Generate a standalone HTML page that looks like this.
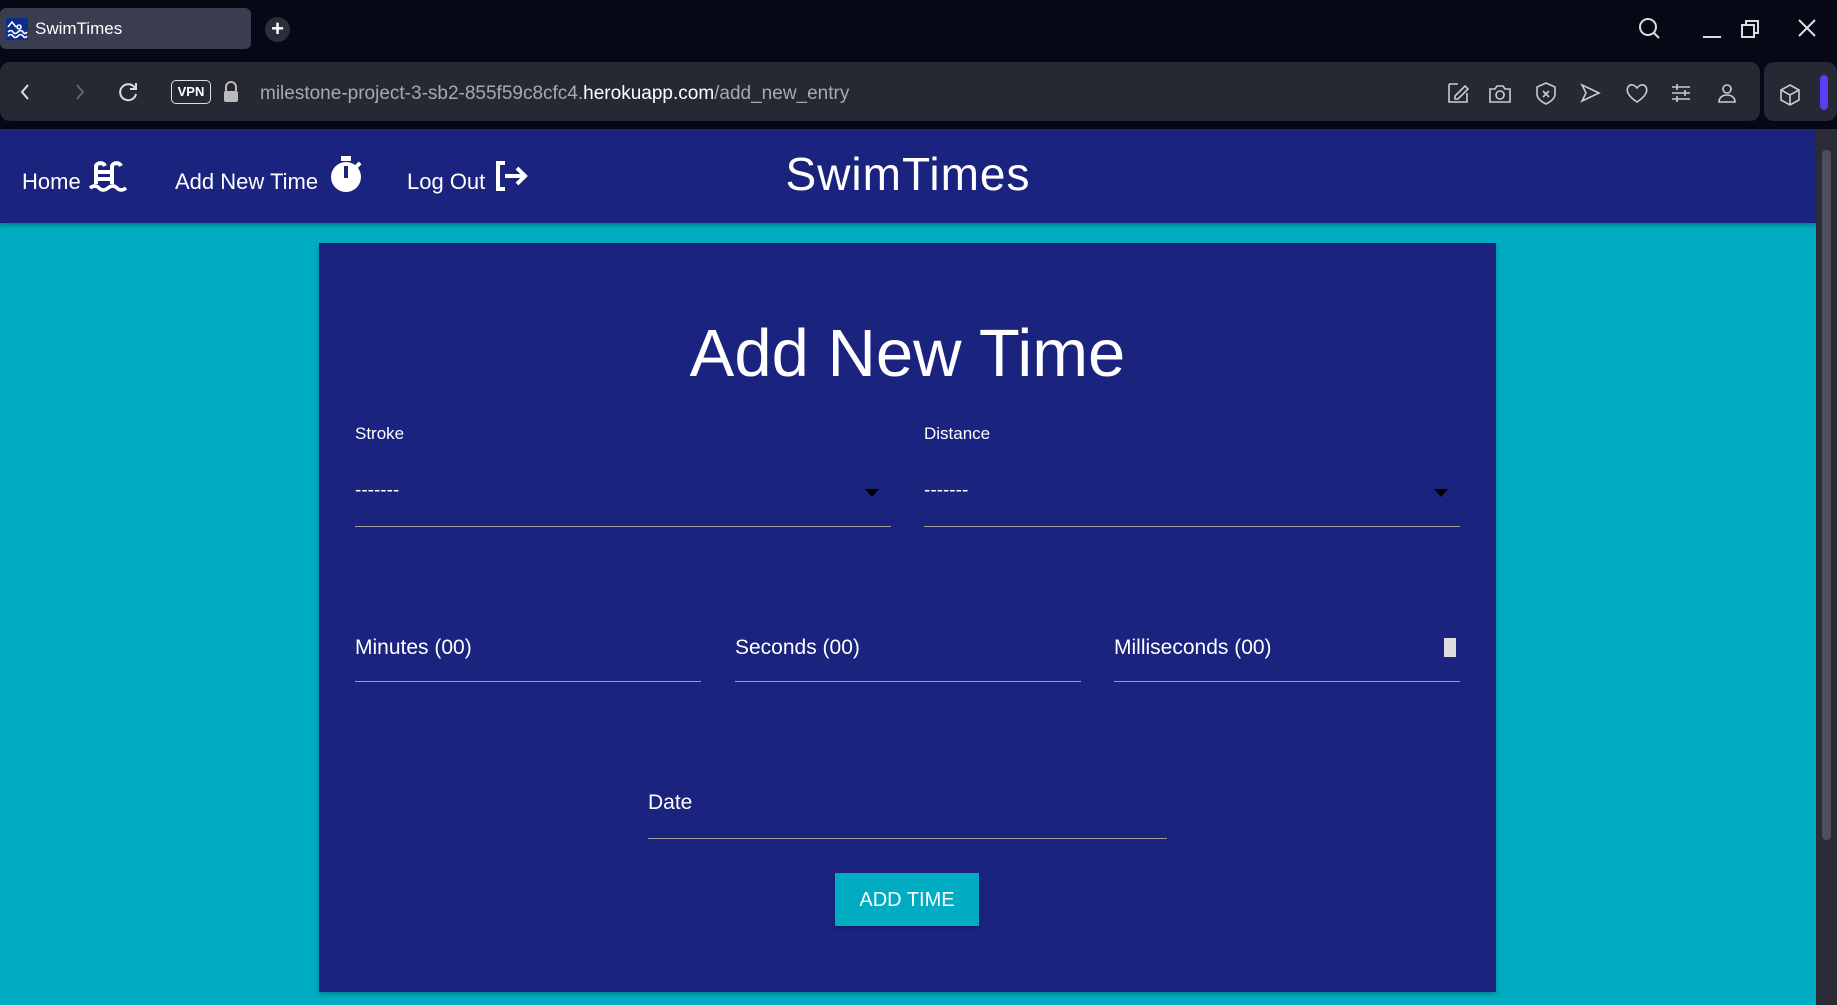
<!DOCTYPE html>
<html><head><meta charset="utf-8"><style>
*{margin:0;padding:0;box-sizing:border-box}
body{width:1837px;height:1005px;overflow:hidden;background:#00acc1;font-family:"Liberation Sans",sans-serif;position:relative}
.abs{position:absolute}
.top{left:0;top:0;width:1837px;height:129px;background:#050815}
.tab{left:0;top:8px;width:251px;height:41px;background:#3a3d50;border-radius:6px;color:#fff;font-size:17px;line-height:41px;padding-left:35px}
.addr{left:0;top:62px;width:1760px;height:59px;background:#262833;border-radius:10px}
.ext{left:1764px;top:62px;width:73px;height:59px;background:#262833;border-radius:10px}
.url{left:260px;top:83px;font-size:19px;color:#a8a9b0}
.url b{color:#fff;font-weight:normal}
.nav{left:0;top:129px;width:1816px;height:94px;background:#1a237e;box-shadow:0 2px 4px rgba(0,0,0,.3)}
.nl{color:#fff;font-size:22px;top:169px}
.card{left:319px;top:243px;width:1177px;height:749px;background:#1a237e;box-shadow:0 2px 4px rgba(0,0,0,.25)}
.line{height:1px;background:#9e9e9e}
.lbl{color:#fff;font-size:17px}
.in{color:#fff;font-size:21px}
.tri{width:0;height:0;border-left:7px solid transparent;border-right:7px solid transparent;border-top:8px solid #000}
svg{position:absolute}
</style></head><body>
<div class="abs top"></div>
<div class="abs tab">SwimTimes</div>
<svg style="left:6px;top:18px" width="22" height="22"><rect width="22" height="22" fill="#0d2d8f"/><path d="M2 9l4-5 4 5M13 7a2 2 0 1 0 .1 0M2 14q3-3 5 0t5 0 5 0 4 0M2 18q3-3 5 0t5 0 5 0 4 0" stroke="#fff" fill="none" stroke-width="1.6"/></svg>
<div class="abs" style="left:265px;top:17px;width:25px;height:25px;border-radius:50%;background:#2a2d3a;color:#fff;font-size:22px;line-height:24px;text-align:center;font-weight:bold">+</div>
<svg style="left:1635px;top:17px" width="200" height="26" stroke="#ddd" fill="none" stroke-width="2"><circle cx="13" cy="10" r="8"/><path d="M19 16l5 5"/><path d="M68 20h18"/><rect x="107" y="8" width="12" height="12"/><path d="M111 8V4h12v12h-4"/><path d="M164 3l16 16M180 3l-16 16"/></svg>
<div class="abs addr"></div>
<div class="abs ext"></div>
<svg style="left:15px;top:80px" width="140" height="24" stroke-width="2" fill="none"><path d="M13 5l-6 7 6 7" stroke="#ddd"/><path d="M62 5l6 7-6 7" stroke="#666"/><path d="M120 8a8 8 0 1 0 1 6M121 3v6h-6" stroke="#ddd"/></svg>
<div class="abs" style="left:171px;top:80px;width:40px;height:24px;border:1.5px solid #ddd;border-radius:5px;color:#fff;font-size:13px;font-weight:bold;text-align:center;line-height:21px">VPN</div>
<svg style="left:222px;top:80px" width="18" height="24"><path d="M4 11V7a5 5 0 0 1 10 0v4" stroke="#bbb" stroke-width="2" fill="none"/><rect x="2" y="11" width="14" height="11" rx="2" fill="#bbb"/></svg>
<div class="abs url">milestone-project-3-sb2-855f59c8cfc4.<b>herokuapp.com</b>/add_new_entry</div>
<svg style="left:1445px;top:80px" width="390" height="26" stroke="#ccc" fill="none" stroke-width="1.6"><path d="M4 4h9M4 4v18h18v-9M10 16l10-10 3 3-10 10h-3z"/><path d="M45 9h5l2-3h6l2 3h5v13h-20zM55 11a4 4 0 1 0 .1 0"/><path d="M101 3l9 4v7c0 5-5 8-9 10-4-2-9-5-9-10v-7zM98 11l6 6M104 11l-6 6"/><path d="M137 5l17 8-17 8 4-8z"/><path d="M192 22c-9-6-11-11-9-15 2-3 6-3 9 1 3-4 7-4 9-1 2 4 0 9-9 15z"/><path d="M227 7h18M227 13h18M227 19h18M232 4v6M240 10v6M232 16v6"/><path d="M282 5a4 4 0 1 0 .1 0M274 22c0-4 3-7 8-7s8 3 8 7z"/><path d="M345 5l9 5v10l-9 5-9-5v-10zM336 10l9 5 9-5M345 15v10"/></svg>
<div class="abs" style="left:1820px;top:75px;width:8px;height:35px;background:#5b3cf5;border-radius:4px"></div>
<div class="abs nav"></div>
<div class="abs" style="left:1816px;top:129px;width:21px;height:876px;background:#2b2c36"></div>
<div class="abs" style="left:1822px;top:150px;width:9px;height:690px;background:#4d4e5c;border-radius:4px"></div>
<div class="abs nl" style="left:22px">Home</div>
<svg style="left:88px;top:158px" width="42" height="36" fill="none" stroke="#fff" stroke-width="4"><path d="M8 26V8a5 5 0 0 1 9 0M24 26V8a5 5 0 0 1 9 0M8 14h16M8 21h16"/><path d="M2 30q5-4 9 0t9 0 9 0 9 0" stroke-width="3.5"/></svg>
<div class="abs nl" style="left:175px">Add New Time</div>
<svg style="left:330px;top:155px" width="32" height="38"><rect x="11" y="1" width="10" height="5" fill="#fff"/><circle cx="16" cy="22" r="15" fill="#fff"/><rect x="14" y="11" width="4" height="12" fill="#1a237e"/><rect x="26" y="7" width="4" height="6" fill="#fff" transform="rotate(45 28 10)"/></svg>
<div class="abs nl" style="left:407px">Log Out</div>
<svg style="left:493px;top:160px" width="38" height="32" fill="none" stroke="#fff" stroke-width="4"><path d="M12 3H5v26h7"/><path d="M12 16h20M24 8l8 8-8 8"/></svg>
<div class="abs" style="left:0;width:1816px;top:147px;text-align:center;color:#fff;font-size:46px;letter-spacing:1px">SwimTimes</div>
<div class="abs card"></div>
<div class="abs" style="left:319px;width:1177px;top:315px;text-align:center;color:#fff;font-size:67px">Add New Time</div>
<div class="abs lbl" style="left:355px;top:424px">Stroke</div>
<div class="abs lbl" style="left:924px;top:424px">Distance</div>
<div class="abs in" style="left:355px;top:480px;font-size:19px">-------</div>
<div class="abs in" style="left:924px;top:480px;font-size:19px">-------</div>
<div class="abs tri" style="left:865px;top:489px"></div>
<div class="abs tri" style="left:1434px;top:489px"></div>
<div class="abs line" style="left:355px;top:526px;width:536px"></div>
<div class="abs line" style="left:924px;top:526px;width:536px"></div>
<div class="abs in" style="left:355px;top:636px">Minutes (00)</div>
<div class="abs in" style="left:735px;top:636px">Seconds (00)</div>
<div class="abs in" style="left:1114px;top:636px">Milliseconds (00)</div>
<div class="abs" style="left:1444px;top:638px;width:12px;height:19px;background:#ddd"></div>
<div class="abs line" style="left:355px;top:681px;width:346px"></div>
<div class="abs line" style="left:735px;top:681px;width:346px"></div>
<div class="abs line" style="left:1114px;top:681px;width:346px"></div>
<div class="abs in" style="left:648px;top:791px">Date</div>
<div class="abs line" style="left:648px;top:838px;width:519px"></div>
<div class="abs" style="left:835px;top:873px;width:144px;height:53px;background:#00acc1;color:#fff;font-size:20px;line-height:55px;text-align:center;box-shadow:0 2px 3px rgba(0,0,0,.25)">ADD TIME</div>
</body></html>
